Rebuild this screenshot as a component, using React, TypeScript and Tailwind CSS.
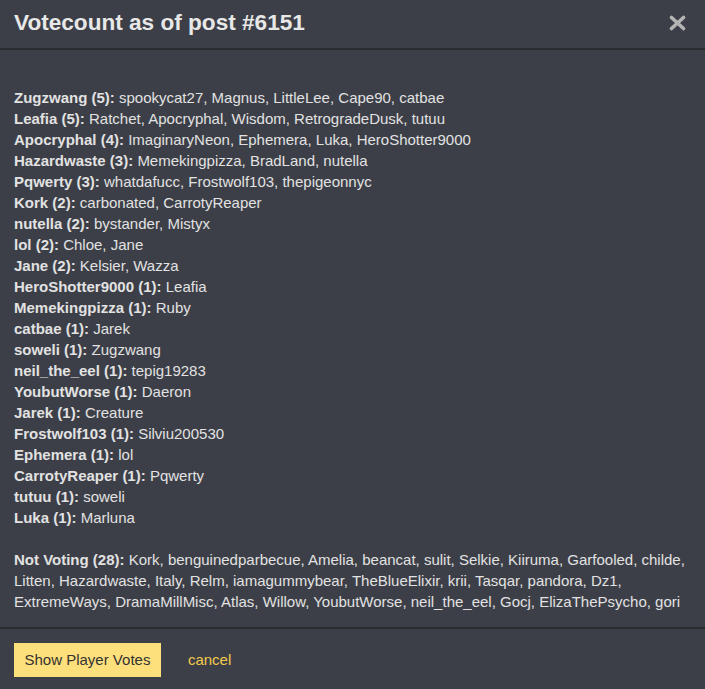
import React from "react";

const rows: [string, string][] = [
  ["Zugzwang (5):", "spookycat27, Magnus, LittleLee, Cape90, catbae"],
  ["Leafia (5):", "Ratchet, Apocryphal, Wisdom, RetrogradeDusk, tutuu"],
  ["Apocryphal (4):", "ImaginaryNeon, Ephemera, Luka, HeroShotter9000"],
  ["Hazardwaste (3):", "Memekingpizza, BradLand, nutella"],
  ["Pqwerty (3):", "whatdafucc, Frostwolf103, thepigeonnyc"],
  ["Kork (2):", "carbonated, CarrotyReaper"],
  ["nutella (2):", "bystander, Mistyx"],
  ["lol (2):", "Chloe, Jane"],
  ["Jane (2):", "Kelsier, Wazza"],
  ["HeroShotter9000 (1):", "Leafia"],
  ["Memekingpizza (1):", "Ruby"],
  ["catbae (1):", "Jarek"],
  ["soweli (1):", "Zugzwang"],
  ["neil_the_eel (1):", "tepig19283"],
  ["YoubutWorse (1):", "Daeron"],
  ["Jarek (1):", "Creature"],
  ["Frostwolf103 (1):", "Silviu200530"],
  ["Ephemera (1):", "lol"],
  ["CarrotyReaper (1):", "Pqwerty"],
  ["tutuu (1):", "soweli"],
  ["Luka (1):", "Marluna"],
];

export default function App() {
  return (
    <div
      className="w-[705px] h-[689px] bg-[#3c3f47] text-[#e2e2e2] flex flex-col overflow-hidden"
      style={{ fontFamily: '"Liberation Sans", Arial, sans-serif' }}
    >
      <div className="h-[50px] flex items-center justify-between pl-[14px] pr-[19px] border-b-2 border-[#2a2c30] shrink-0">
        <h1 className="text-[22.6px] font-bold text-[#e8e8e8] leading-none mt-[-2px]">Votecount as of post #6151</h1>
        <svg width="17" height="16" viewBox="0 0 17 16" className="mt-[-2px]">
          <path d="M2.5 2.5 L14.5 13.5 M14.5 2.5 L2.5 13.5" stroke="#b4b4b4" strokeWidth="3.6" strokeLinecap="round" />
        </svg>
      </div>
      <div className="flex-1 px-[14px] pt-[37px] text-[15px] leading-[21px]">
        {rows.map(([n, v]) => (
          <div key={n}>
            <b className="font-bold">{n}</b> {v}
          </div>
        ))}
        <div className="mt-[21px]">
          <b className="font-bold">Not Voting (28):</b> Kork, benguinedparbecue, Amelia, beancat, sulit, Selkie, Kiiruma, Garfooled, childe, Litten, Hazardwaste, Italy, Relm, iamagummybear, TheBlueElixir, krii, Tasqar, pandora, Dz1, ExtremeWays, DramaMillMisc, Atlas, Willow, YoubutWorse, neil_the_eel, Gocj, ElizaThePsycho, gori
        </div>
      </div>
      <div className="h-[62px] border-t-2 border-[#2a2c30] flex items-start pt-[14px] pl-[14px] gap-[27px] shrink-0">
        <button className="h-[34px] px-[10.5px] bg-[#fddf7b] text-[#333] text-[15px]">Show Player Votes</button>
        <span className="text-[15px] text-[#f2c94c] leading-[34px]">cancel</span>
      </div>
    </div>
  );
}
